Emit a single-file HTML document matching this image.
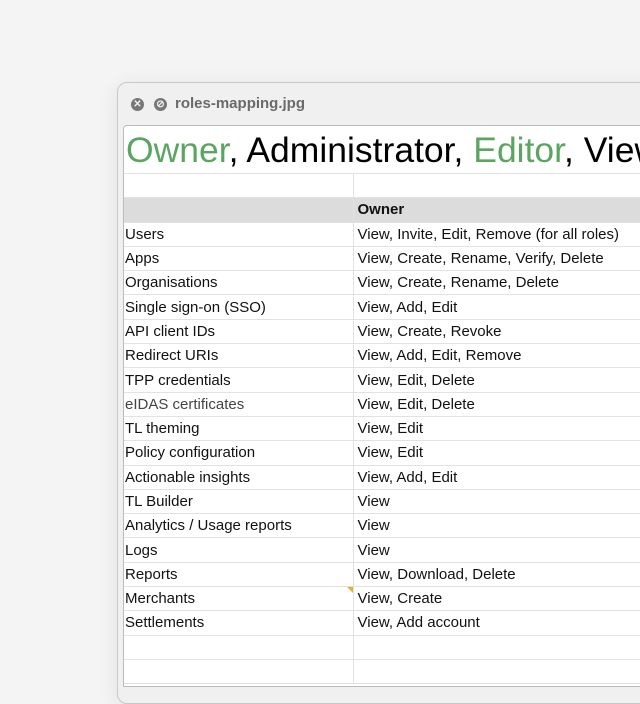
<!DOCTYPE html>
<html><head><style>
body{margin:0;width:640px;height:640px;overflow:hidden;background:#f4f4f4;font-family:"Liberation Sans",Arial,sans-serif;position:relative}
.win{position:absolute;left:117px;top:82px;width:540px;height:620px;background:#f0f0f0;border:1px solid #c9c9c9;border-radius:10px;box-shadow:0 4px 20px rgba(0,0,0,.08)}
.btn{position:absolute;top:15px;width:13px;height:13px;border-radius:50%;background:#777;color:#f0f0f0;font-size:10px;line-height:13px;text-align:center;font-weight:bold}
.fn{position:absolute;left:57px;top:12px;font-size:15px;font-weight:bold;color:#6a6a6a}
.sheet{position:absolute;left:123px;top:125px;width:530px;height:560px;background:#fff;border:1px solid #bbb;border-radius:4px 0 0 0;overflow:hidden}
.title{position:absolute;left:2px;top:4px;font-size:35.5px;white-space:nowrap;color:#000}
.g{color:#5aa660}
table{position:absolute;top:47px;left:0;border-collapse:collapse;font-size:15px;color:#111;table-layout:fixed;width:560px}
td{height:23.3px;padding:0 0 0 1px;border-bottom:1px solid #e2e2e2;border-right:1px solid #e2e2e2;white-space:nowrap;overflow:hidden}
td.b{padding-left:4px}
tr.h td{background:#dcdcdc;font-weight:bold}
tr.first td{border-top:1px solid #e2e2e2}
</style></head><body>
<div class="win">
<div class="btn" style="left:13px">✕</div>
<div class="btn" style="left:36px">⊘</div>
<div class="fn">roles-mapping.jpg</div>
</div>
<div class="sheet">
<div class="title"><span class="g">Owner</span>, Administrator, <span class="g">Editor</span>, Viewer</div>
<table>
<colgroup><col style="width:229px"><col style="width:331px"></colgroup>
<tr class="first"><td class="a"></td><td class="b"></td></tr>
<tr class="h"><td class="a"></td><td class="b">Owner</td></tr>
<tr><td class="a">Users</td><td class="b">View, Invite, Edit, Remove (for all roles)</td></tr>
<tr><td class="a">Apps</td><td class="b">View, Create, Rename, Verify, Delete</td></tr>
<tr><td class="a">Organisations</td><td class="b">View, Create, Rename, Delete</td></tr>
<tr><td class="a">Single sign-on (SSO)</td><td class="b">View, Add, Edit</td></tr>
<tr><td class="a">API client IDs</td><td class="b">View, Create, Revoke</td></tr>
<tr><td class="a">Redirect URIs</td><td class="b">View, Add, Edit, Remove</td></tr>
<tr><td class="a">TPP credentials</td><td class="b">View, Edit, Delete</td></tr>
<tr><td class="a" style="color:#444">eIDAS certificates</td><td class="b">View, Edit, Delete</td></tr>
<tr><td class="a">TL theming</td><td class="b">View, Edit</td></tr>
<tr><td class="a">Policy configuration</td><td class="b">View, Edit</td></tr>
<tr><td class="a">Actionable insights</td><td class="b">View, Add, Edit</td></tr>
<tr><td class="a">TL Builder</td><td class="b">View</td></tr>
<tr><td class="a">Analytics / Usage reports</td><td class="b">View</td></tr>
<tr><td class="a">Logs</td><td class="b">View</td></tr>
<tr><td class="a">Reports</td><td class="b">View, Download, Delete</td></tr>
<tr><td class="a" style="position:relative">Merchants<span style="position:absolute;right:0;top:0;width:0;height:0;border-top:6px solid #e8b030;border-left:6px solid transparent"></span></td><td class="b">View, Create</td></tr>
<tr><td class="a">Settlements</td><td class="b">View, Add account</td></tr>
<tr><td class="a"></td><td class="b"></td></tr>
<tr><td class="a"></td><td class="b"></td></tr>
</table>
</div>
</body></html>
